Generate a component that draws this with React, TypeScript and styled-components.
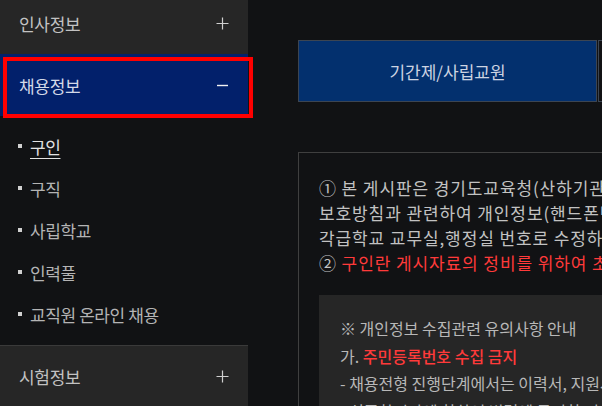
import React from 'react';
import { styled, createGlobalStyle } from 'styled-components';

const GlobalStyle = createGlobalStyle`
  html, body {
    margin: 0;
    padding: 0;
    background: #111214;
    overflow: hidden;
  }
  body {
    font-family: 'Noto Sans CJK KR', 'Noto Sans', sans-serif;
  }
`;

const Page = styled.div`
  display: flex;
  width: 602px;
  height: 406px;
  overflow: hidden;
  background: #111214;
`;

const Sidebar = styled.nav`
  position: relative;
  flex: 0 0 248px;
  margin-top: -8px;
  display: flex;
  flex-direction: column;
`;

const HeadRow = styled.div<{ $active?: boolean; $topLine?: boolean }>`
  height: 62px;
  flex: 0 0 62px;
  display: flex;
  align-items: center;
  justify-content: space-between;
  padding: 0 19px 0 19px;
  box-sizing: border-box;
  background: ${({ $active }) => ($active ? '#02206b' : '#262626')};
  color: ${({ $active }) => ($active ? '#d3d9e8' : '#c2c2c2')};
  font-size: 17px;
  letter-spacing: -0.3px;
  border-top: ${({ $topLine }) => ($topLine ? '1px solid #3a3a3a' : 'none')};
`;

const Divider = styled.div`
  height: 1px;
  background: #333c4a;
`;

// red annotation frame drawn over the selected menu row
const Highlight = styled.div`
  position: absolute;
  left: 3px;
  top: 65px;
  width: 250px;
  height: 61px;
  border: 4px solid #ff0000;
  box-sizing: border-box;
  pointer-events: none;
`;

const SubList = styled.ul`
  list-style: none;
  margin: 0;
  padding: 9px 0 10px;
  flex: 0 0 auto;
`;

const SubItem = styled.li<{ $current?: boolean }>`
  height: 42px;
  display: flex;
  align-items: center;
  padding-left: 18px;
  font-size: 17px;
  letter-spacing: -0.4px;
  color: ${({ $current }) => ($current ? '#e2e2e2' : '#b4b4b4')};

  &::before {
    content: '';
    width: 4px;
    height: 4px;
    margin-right: 8px;
    background: #d0d0d0;
  }

  span {
    text-decoration: ${({ $current }) => ($current ? 'underline' : 'none')};
    text-underline-offset: 4px;
  }
`;

const Main = styled.main`
  flex: 1;
  padding: 40px 0 0 50px;
  min-width: 0;
`;

const Tabs = styled.div`
  display: flex;
  width: 700px;
`;

const Tab = styled.div<{ $active?: boolean }>`
  flex: 0 0 299px;
  height: 62px;
  box-sizing: border-box;
  display: flex;
  align-items: center;
  justify-content: center;
  border: 1px solid #3c4552;
  margin-right: 1px;
  background: ${({ $active }) => ($active ? '#03306e' : '#111214')};
  color: ${({ $active }) => ($active ? '#cdd4e2' : '#9a9a9a')};
  font-size: 17px;
  letter-spacing: 0;
`;

const Notice = styled.section`
  margin-top: 50px;
  width: 700px;
  border: 1px solid #3f3f3f;
  padding: 22px 20px 30px;
  box-sizing: border-box;
`;

const NoticeText = styled.p`
  margin: 0;
  font-size: 17px;
  line-height: 25px;
  letter-spacing: 0.9px;
  color: #c2c2c2;
  white-space: nowrap;
`;

const Red = styled.span<{ $bold?: boolean }>`
  color: #ff3a3a;
  font-weight: ${({ $bold }) => ($bold ? 500 : 400)};
`;

const Caution = styled.div`
  margin-top: 20px;
  background: #262626;
  padding: 20px 21px;
`;

const CautionText = styled.p`
  margin: 0;
  font-size: 16px;
  line-height: 27.5px;
  letter-spacing: 0;
  color: #b8b8b8;
  white-space: nowrap;
`;

const PlusIcon = () => (
  <svg width='13' height='13' viewBox='0 0 13 13'>
    <path d='M6.5 0.5v12M0.5 6.5h12' stroke='#cfcfcf' strokeWidth='1.2' fill='none' />
  </svg>
);

const MinusIcon = () => (
  <svg width='13' height='13' viewBox='0 0 13 13'>
    <path d='M1 6.5h11' stroke='#f2f2f2' strokeWidth='1.4' fill='none' />
  </svg>
);

const subMenu = ['구인', '구직', '사립학교', '인력풀', '교직원 온라인 채용'];

export default function App() {
  return (
    <>
      <GlobalStyle />
      <Page>
        <Sidebar>
          <HeadRow>
            인사정보
            <PlusIcon />
          </HeadRow>
          <Divider />
          <HeadRow $active>
            채용정보
            <MinusIcon />
          </HeadRow>
          <Highlight />
          <SubList>
            {subMenu.map((label, i) => (
              <SubItem key={label} $current={i === 0}>
                <span>{label}</span>
              </SubItem>
            ))}
          </SubList>
          <HeadRow $topLine>
            시험정보
            <PlusIcon />
          </HeadRow>
        </Sidebar>

        <Main>
          <Tabs>
            <Tab $active>기간제/사립교원</Tab>
            <Tab>공무직/기타</Tab>
          </Tabs>

          <Notice>
            <NoticeText>
              ① 본 게시판은 경기도교육청(산하기관 포함) 및 각급학교의 채용 정보를 제공하며, 개인정보
              <br />
              보호방침과 관련하여 개인정보(핸드폰번호 등)가 포함된 게시물은 삭제될 수 있으니 연락처는
              <br />
              각급학교 교무실,행정실 번호로 수정하여 주시기 바랍니다.
              <br />
              ② <Red>구인란 게시자료의 정비를 위하여 초과된 게시물은 삭제될 수 있습니다.</Red>
            </NoticeText>

            <Caution>
              <CautionText>
                ※ 개인정보 수집관련 유의사항 안내
                <br />
                가. <Red $bold>주민등록번호 수집 금지</Red>
                <br />
                - 채용전형 진행단계에서는 이력서, 지원서 등에 주민등록번호를 수집할 수 없습니다.
                <br />
                - 최종합격자에 한하여 법령에 근거한 경우에만 수집 가능합니다.
              </CautionText>
            </Caution>
          </Notice>
        </Main>
      </Page>
    </>
  );
}
